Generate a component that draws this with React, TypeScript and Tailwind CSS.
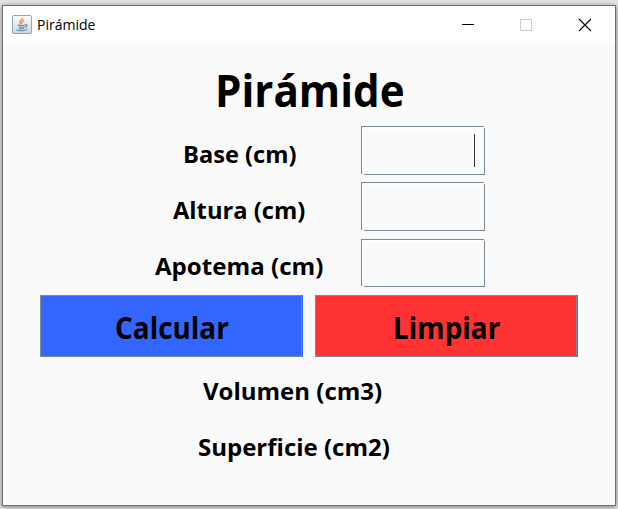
import React from "react";

const face = "font-['Open_Sans','Noto_Sans',sans-serif] [font-variant-ligatures:none]";

function JavaIcon() {
  return (
    <svg width="20" height="19" viewBox="0 0 20 19" className="block shrink-0">
      <defs>
        <linearGradient id="tile" x1="0" y1="0" x2="0" y2="1">
          <stop offset="0" stopColor="#fdfdfd" />
          <stop offset="1" stopColor="#ccd6df" />
        </linearGradient>
      </defs>
      <rect x=".5" y=".5" width="19" height="18" rx="1.5" fill="url(#tile)" stroke="#8fa5b8" />
      <path d="M10.6 2.8C11.1 4.8 7.1 5.7 7.9 7.5c.3.8 1.4 1.1 1.3 2M12.2 5.4c-2.2.8-2.8 1.7-1.7 3.1" fill="none" stroke="#eb9a55" strokeWidth="1.6" />
      <path d="M5.8 9.9c2 .8 5.8.7 7.5-.2M6.7 11.7c1.7.6 4.4.6 5.8 0M7 13.3c1.5.5 3.6.5 5 0M4.2 14.8c2.6 1.2 8.8 1.2 11.2-.2M13.2 9.8c2.5-.6 2.3 1.9-.2 2.5" fill="none" stroke="#6f90ae" strokeWidth="1.2" />
    </svg>
  );
}

function Label({ children, className }: { children: string; className: string }) {
  return <span className={`block origin-left whitespace-nowrap font-bold ${className}`}>{children}</span>;
}

function Field({ className, focused }: { className: string; focused?: boolean }) {
  return (
    <div className={`flex w-[124px] shrink-0 ${className}`}>
      <svg width="124" height="100%" shapeRendering="crispEdges" className="block">
        <rect x="1" y="1" width="122" height="2" fill="#fff" />
        <rect x="1" y="1" width="2" height="100%" fill="#fff" />
        <rect width="123" height="1" fill="#7a8a99" />
        <svg width="124" height="100%" y="-1"><rect width="1" height="100%" fill="#7a8a99" /></svg>
        <svg width="124" height="100%" y="2"><rect x="123" width="1" height="100%" fill="#7a8a99" /></svg>
        <rect x="3" y="100%" width="121" height="1" transform="translate(0 -1)" fill="#7a8a99" />
        {focused && <rect x="113" y="8" width="1" height="33" fill="#333" />}
      </svg>
    </div>
  );
}

export default function App() {
  return (
    <div className={`h-[509px] w-[618px] overflow-hidden bg-[#e4e4e4] pl-[2px] pt-[5px] text-black ${face}`}>
      <main className="flex h-[501px] w-[614px] flex-col border border-[#707070] bg-[#fafafa] shadow-[0_1px_5px_#777]">
        <header className="flex h-[37px] shrink-0 items-center bg-white pl-[9px]">
          <JavaIcon />
          <span className="ml-[5px] w-[420px] pb-[2px] text-[15px] leading-[34px]">
            <span className="inline-block origin-left scale-x-[0.935]">Pirámide</span>
          </span>
          <svg width="158" height="36" shapeRendering="crispEdges" className="block shrink-0">
            <path d="M5 17.5h12" stroke="#000" />
            <rect x="63.5" y="12.5" width="11" height="11" fill="none" stroke="#ccc" />
            <path d="M122 12l12 12M134 12l-12 12" stroke="#000" strokeWidth="1.1" shapeRendering="auto" />
          </svg>
        </header>
        <h1 className="flex h-[83px] shrink-0 items-center pl-[212px] pt-[10px]">
          <Label className="scale-x-[0.957] text-[44px] leading-[60px]">Pirámide</Label>
        </h1>
        <section className="flex flex-col">
          <div className="flex h-[56px]">
            <div className="w-[358px] pl-[180px] pt-[3px]"><Label className="scale-x-[0.985] text-[24px] leading-[50px]">Base (cm)</Label></div>
            <Field className="h-[49px]" focused />
          </div>
          <div className="flex h-[57px]">
            <div className="w-[358px] pl-[170px] pt-[3px]"><Label className="scale-x-[0.988] text-[24px] leading-[50px]">Altura (cm)</Label></div>
            <Field className="h-[49px]" />
          </div>
          <div className="flex h-[56px]">
            <div className="w-[358px] pl-[152px] pt-[2px]"><Label className="scale-x-[1.004] text-[24px] leading-[50px]">Apotema (cm)</Label></div>
            <Field className="h-[48px]" />
          </div>
        </section>
        <div className="flex h-[62px] shrink-0 gap-[12px] pl-[37px]">
          <button className="flex w-[263px] bg-[#3366ff] pr-px">
            <span className="flex h-[62px] w-[262px] border border-[#7a8a99] pl-[74px] pt-[2px]">
              <Label className="scale-x-[0.93] text-[30px] leading-[60px]">Calcular</Label>
            </span>
          </button>
          <button className="flex w-[263px] bg-[#ff3333] pr-px">
            <span className="flex h-[62px] w-[262px] border border-[#7a8a99] pl-[77px] pt-[2px]">
              <Label className="scale-x-[0.93] text-[30px] leading-[60px]">Limpiar</Label>
            </span>
          </button>
        </div>
        <div className="pl-[200px] pt-[9px]"><Label className="text-[24px] leading-[50px]">Volumen (cm3)</Label></div>
        <div className="pl-[195px] pt-[6px]"><Label className="text-[24px] leading-[50px]">Superficie (cm2)</Label></div>
      </main>
    </div>
  );
}
